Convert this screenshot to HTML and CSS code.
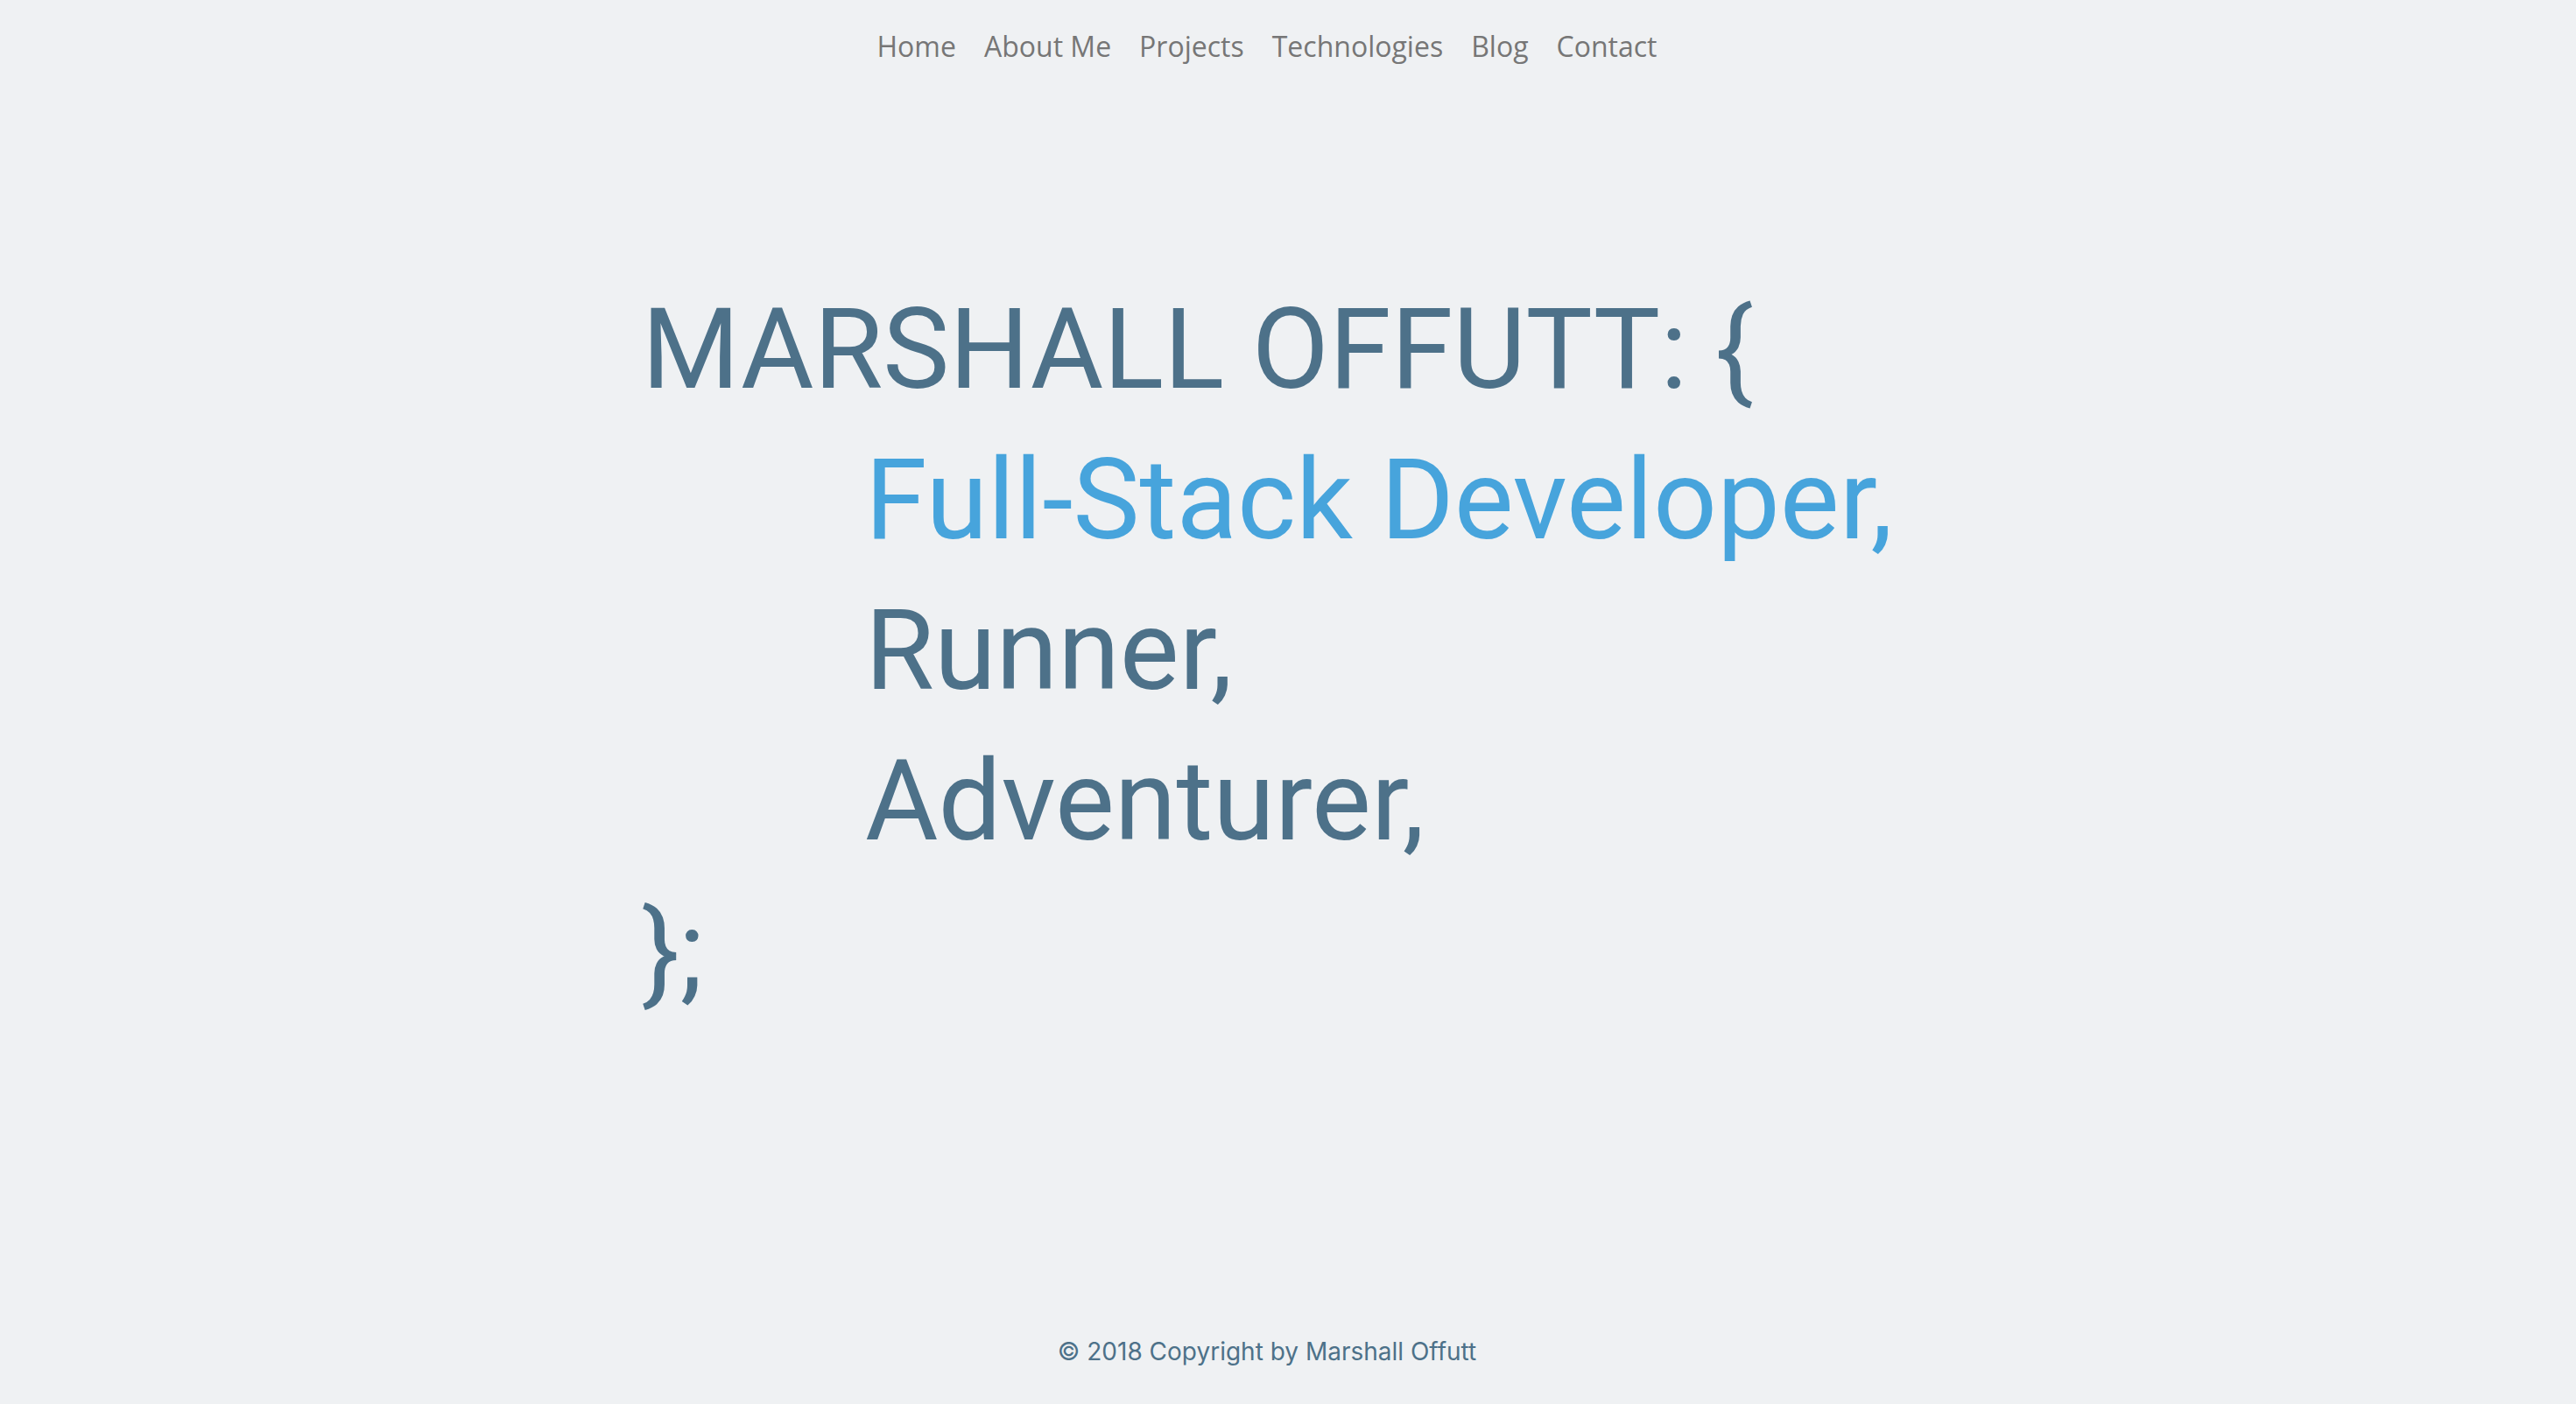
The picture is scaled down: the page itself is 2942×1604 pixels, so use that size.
FILE: index.html
```html
<!DOCTYPE html>
<html lang="en">
<head>
<meta charset="utf-8">
<title>Marshall Offutt</title>
<link rel="stylesheet" href="styles.css">
</head>
<body>
<div class="page">
  <nav class="nav">
    <a class="nav-link" href="#">Home</a>
    <a class="nav-link" href="#">About Me</a>
    <a class="nav-link" href="#">Projects</a>
    <a class="nav-link" href="#">Technologies</a>
    <a class="nav-link" href="#">Blog</a>
    <a class="nav-link" href="#">Contact</a>
  </nav>
  <main class="hero">
    <div class="hero-line">MARSHALL OFFUTT: {</div>
    <div class="hero-line indent accent">Full-Stack Developer,</div>
    <div class="hero-line indent">Runner,</div>
    <div class="hero-line indent">Adventurer,</div>
    <div class="hero-line">};</div>
  </main>
  <footer class="footer">© 2018 Copyright by Marshall Offutt</footer>
</div>
</body>
</html>
```

FILE: styles.css
```css
html, body {
  margin: 0;
  padding: 0;
  background: #eff1f3;
}
.page {
  min-height: 100vh;
  width: 2894px;
  display: flex;
  flex-direction: column;
}
.nav {
  display: flex;
  justify-content: center;
  gap: 32px;
  padding-top: 31px;
}
.nav-link {
  font-family: "Open Sans", sans-serif;
  font-size: 32px;
  line-height: 44px;
  color: #767676;
  text-decoration: none;
}
.hero {
  flex: 1;
  width: 1428px;
  margin: 0 auto;
  padding-top: 238px;
  font-family: Roboto, sans-serif;
  font-size: 128px;
  line-height: 172px;
  color: #4d7189;
}
.hero-line {
  white-space: nowrap;
}
.indent {
  padding-left: 255px;
}
.accent {
  color: #47a4dc;
}
.footer {
  text-align: center;
  font-family: Inter, sans-serif;
  font-size: 28px;
  line-height: 40px;
  color: #4d7189;
  padding-bottom: 40px;
}
```
